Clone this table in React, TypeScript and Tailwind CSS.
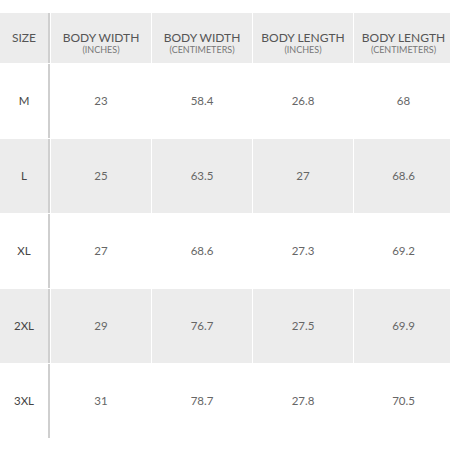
const headers = [
  { title: "SIZE", unit: "" },
  { title: "BODY WIDTH", unit: "(INCHES)" },
  { title: "BODY WIDTH", unit: "(CENTIMETERS)" },
  { title: "BODY LENGTH", unit: "(INCHES)" },
  { title: "BODY LENGTH", unit: "(CENTIMETERS)" },
];

const rows = [
  ["M", "23", "58.4", "26.8", "68"],
  ["L", "25", "63.5", "27", "68.6"],
  ["XL", "27", "68.6", "27.3", "69.2"],
  ["2XL", "29", "76.7", "27.5", "69.9"],
  ["3XL", "31", "78.7", "27.8", "70.5"],
];

export default function App() {
  return (
    <div
      className="w-[450px] h-[450px] bg-white pt-[13px]"
      style={{ fontFamily: "Lato, 'Open Sans', sans-serif" }}
    >
      <div className="grid grid-cols-[50px_100px_100px_100px_99px] gap-[1px] bg-white">
        {headers.map((h, i) => (
          <div
            key={i}
            className={`h-[50px] bg-[#ececec] flex flex-col items-center pt-[18px] text-[#555] ${
              i === 0 ? "border-r-2 border-[#cfcfcf]" : ""
            }`}
          >
            <span className="text-[12px] leading-[14px]">{h.title}</span>
            {h.unit && (
              <span className="text-[9px] leading-[10px] text-[#777]">{h.unit}</span>
            )}
          </div>
        ))}
        {rows.map((r, ri) =>
          r.map((c, ci) => (
            <div
              key={`${ri}-${ci}`}
              className={`h-[74px] flex items-center justify-center text-[11.5px] ${
                ri % 2 === 1 ? "bg-[#ececec]" : "bg-white"
              } ${ci === 0 ? "border-r-2 border-[#cfcfcf] text-[#444]" : "text-[#666]"}`}
            >
              {c}
            </div>
          ))
        )}
      </div>
    </div>
  );
}
